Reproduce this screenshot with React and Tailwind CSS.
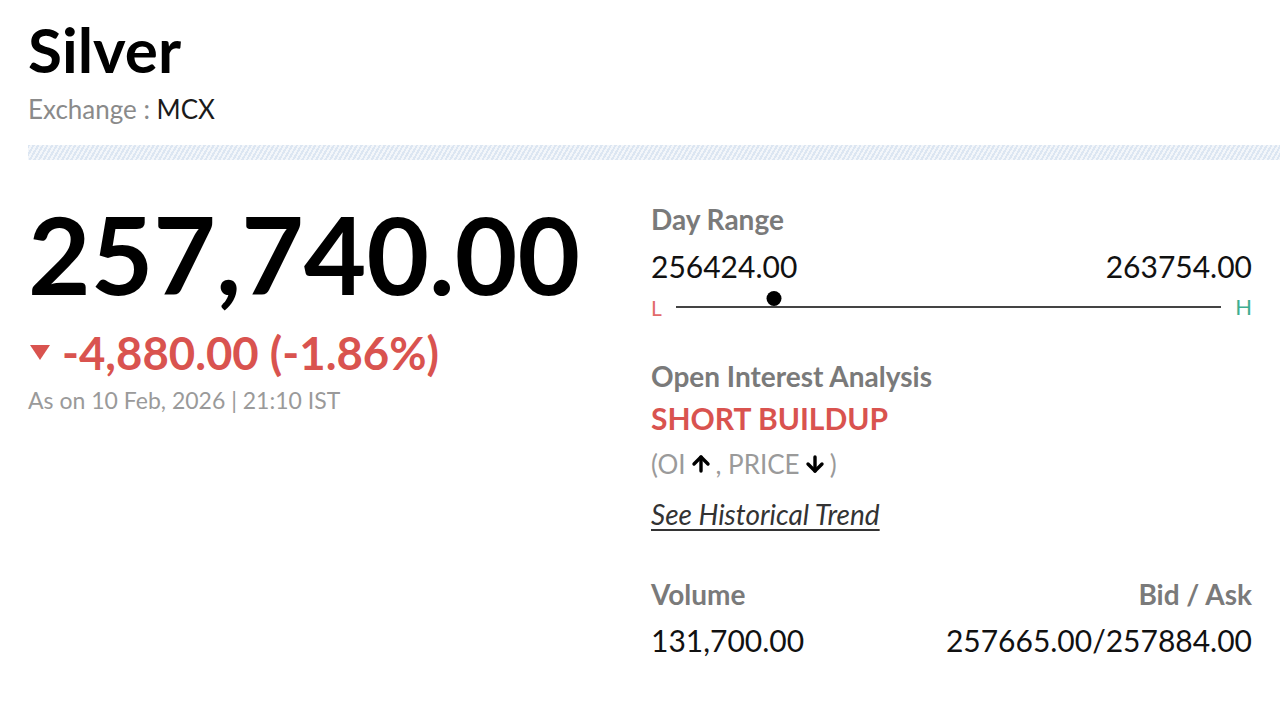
import { ArrowUp, ArrowDown } from "lucide-react";

function Label({ children, className = "" }) {
  return <div className={`text-[28px] font-bold leading-none text-[#7a7a7a] ${className}`}>{children}</div>;
}

export default function App() {
  const low = 256424;
  const high = 263754;
  const ltp = 257740;
  const pct = ((ltp - low) / (high - low)) * 100;

  return (
    <div className="min-h-screen bg-white font-['Lato','Noto_Sans',sans-serif] text-black">
      <div className="pl-7 pt-[18px]">
        <h1 className="text-[62px] font-bold leading-none">Silver</h1>
        <div className="mt-[16px] text-[26px] leading-none text-[#8a8a8a]">
          Exchange : <span className="text-[#1a1a1a]">MCX</span>
        </div>
        <div className="mt-[23px] h-[15px] bg-[repeating-linear-gradient(120deg,#dce6f2_0px,#dce6f2_2px,#f3f6fa_2px,#f3f6fa_4px)]" />
      </div>

      <div className="flex px-7">
        <div className="w-[623px] shrink-0">
          <div className="mt-[39px] text-[108px] font-bold leading-none">257,740.00</div>
          <div className="mt-[23px] flex items-center text-[45.5px] font-bold leading-none text-[#d9534f]">
            <span className="mr-3 ml-[2px] inline-block h-0 w-0 border-x-[10px] border-t-[15px] border-x-transparent border-t-[#d9534f]" />
            -4,880.00 (-1.86%)
          </div>
          <div className="mt-[13px] text-[23px] leading-none text-[#9a9a9a]">As on 10 Feb, 2026 | 21:10 IST</div>
        </div>

        <div className="flex-1">
          <Label className="mt-[45px]">Day Range</Label>
          <div className="mt-[18px] flex justify-between text-[30px] leading-none text-[#111]">
            <span>256424.00</span>
            <span>263754.00</span>
          </div>
          <div className="mt-[15px] flex items-center gap-[14px]">
            <span className="text-[21px] leading-none text-[#e26a6a]">L</span>
            <div className="relative h-[2px] flex-1 bg-[#444]">
              <span
                className="absolute top-[-15px] h-[15px] w-[15px] -translate-x-1/2 rounded-full bg-black"
                style={{ left: `${pct}%` }}
              />
            </div>
            <span className="text-[22px] leading-none text-[#3fae90]">H</span>
          </div>

          <Label className="mt-[44px]">Open Interest Analysis</Label>
          <div className="mt-[13px] text-[30px] font-bold leading-none text-[#d9534f]">SHORT BUILDUP</div>
          <div className="mt-[18px] flex items-center text-[26px] leading-none text-[#9a9a9a]">
            (OI
            <ArrowUp className="mx-[3px] h-[24px] w-[24px] text-black" strokeWidth={3.4} />
            , PRICE
            <ArrowDown className="mx-[3px] h-[24px] w-[24px] text-black" strokeWidth={3.4} />)
          </div>
          <a href="#" className="mt-[23px] block w-fit text-[28px] italic leading-none text-[#333] underline underline-offset-[4px]">
            See Historical Trend
          </a>

          <div className="mt-[52px] flex justify-between">
            <Label>Volume</Label>
            <Label>Bid / Ask</Label>
          </div>
          <div className="mt-[17px] flex justify-between text-[30px] leading-none text-[#111]">
            <span>131,700.00</span>
            <span>257665.00/257884.00</span>
          </div>
        </div>
      </div>
    </div>
  );
}
